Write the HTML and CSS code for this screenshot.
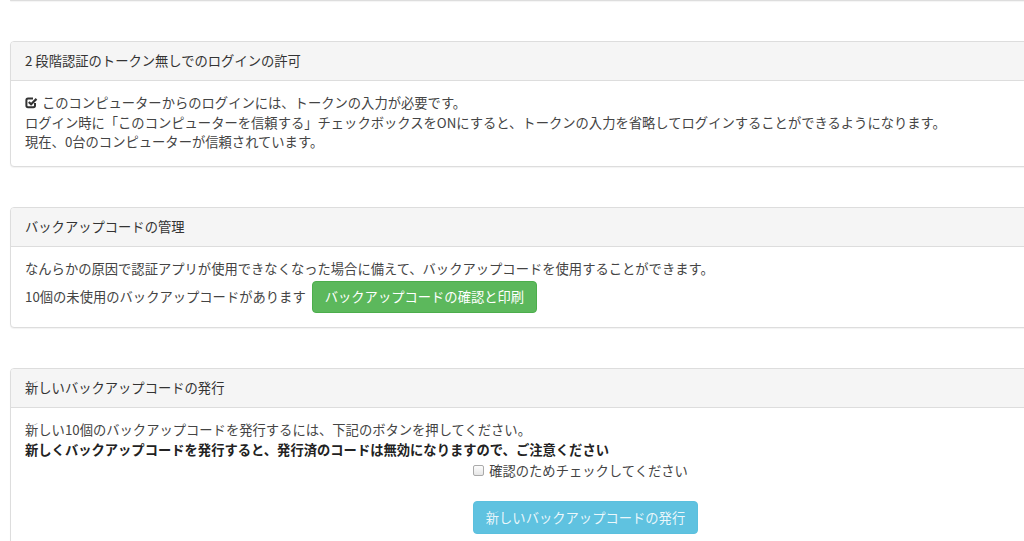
FILE: index.html
```html
<!DOCTYPE html>
<html lang="ja">
<head>
  <meta charset="utf-8"/>
  <title>2段階認証の設定</title>
  <link rel="stylesheet" href="styles.css">
</head>
<body>
  <div class="page">
    <div class="panel panel-tail"></div>

    <div class="panel">
      <div class="panel-heading">2 段階認証のトークン無しでのログインの許可</div>
      <div class="panel-body">
        <div>
          <svg class="icon-check" width="13" height="13" viewBox="0 0 13 13">
            <path d="M10 7v2.6a1.6 1.6 0 0 1-1.6 1.6H3a1.6 1.6 0 0 1-1.6-1.6V4.2A1.6 1.6 0 0 1 3 2.6h5" fill="none" stroke="#333" stroke-width="2"/>
            <path d="M3.8 6l2.3 2.3 5.4-5.4" fill="none" stroke="#333" stroke-width="2.2"/>
          </svg>
          このコンピューターからのログインには、トークンの入力が必要です。
        </div>
        <div>ログイン時に「このコンピューターを信頼する」チェックボックスをONにすると、トークンの入力を省略してログインすることができるようになります。</div>
        <div>現在、0台のコンピューターが信頼されています。</div>
      </div>
    </div>

    <div class="panel">
      <div class="panel-heading">バックアップコードの管理</div>
      <div class="panel-body">
        <div>なんらかの原因で認証アプリが使用できなくなった場合に備えて、バックアップコードを使用することができます。</div>
        <div class="row-inline">
          10個の未使用のバックアップコードがあります
          <button class="btn btn-success">バックアップコードの確認と印刷</button>
        </div>
      </div>
    </div>

    <div class="panel">
      <div class="panel-heading">新しいバックアップコードの発行</div>
      <div class="panel-body">
        <div>新しい10個のバックアップコードを発行するには、下記のボタンを押してください。</div>
        <div class="strong">新しくバックアップコードを発行すると、発行済のコードは無効になりますので、ご注意ください</div>
        <div class="confirm">
          <label><input type="checkbox"> 確認のためチェックしてください</label>
        </div>
        <div class="actions">
          <button class="btn btn-info" disabled>新しいバックアップコードの発行</button>
        </div>
      </div>
    </div>
  </div>
</body>
</html>
```

FILE: styles.css
```css
html, body {
  overflow: hidden;
}
body {
  margin: 0;
  font-family: "Noto Sans CJK JP", "Noto Sans", sans-serif;
  font-size: 13.3px;
  line-height: 19.5px;
  color: #333;
  background: #fff;
}
.page {
  padding-left: 10px;
}
.panel {
  width: 1150px;
  background: #fff;
  border: 1px solid #ddd;
  border-radius: 4px;
  box-shadow: 0 1px 1px rgba(0, 0, 0, 0.05);
  margin-bottom: 40px;
}
.panel-tail {
  height: 0;
  border-top: none;
  border-radius: 0 0 4px 4px;
  margin-bottom: 40px;
}
.panel-heading {
  background: #f5f5f5;
  border-bottom: 1px solid #ddd;
  border-radius: 3px 3px 0 0;
  padding: 10px 15px 10px 14px;
  line-height: 18px;
  color: #333;
}
.panel-body {
  padding: 12px 15px 14px 14px;
  color: #444;
}
.icon-check {
  vertical-align: -1px;
  margin-right: 1px;
}
.row-inline {
  margin-top: 3px;
  display: flex;
  align-items: center;
  gap: 6px;
}
.btn {
  font-family: inherit;
  font-size: 13.3px;
  line-height: 20px;
  padding: 5px 12px;
  border: 1px solid transparent;
  border-radius: 4px;
  color: #fff;
  cursor: pointer;
}
.btn-success {
  background: #5cb85c;
  border-color: #4cae4c;
}
.btn-info {
  background: #5fc2e0;
  border-color: #5bc0de;
  color: rgba(255, 255, 255, 0.88);
  cursor: not-allowed;
  padding: 6px 12px 5px;
}
.strong {
  font-weight: bold;
  color: #222;
}
.confirm, .actions {
  text-align: center;
}
.confirm {
  margin-top: 2px;
}
.confirm label {
  display: inline-flex;
  align-items: center;
  gap: 5px;
  margin-right: 10px;
  color: #444;
}
.confirm input {
  appearance: none;
  margin: 0;
  width: 11px;
  height: 11px;
  border: 1px solid #aaa;
  border-radius: 2px;
  background: linear-gradient(#fdfdfd, #e6e6e6);
}
.actions {
  padding-top: 20px;
  padding-bottom: 20px;
}
```
